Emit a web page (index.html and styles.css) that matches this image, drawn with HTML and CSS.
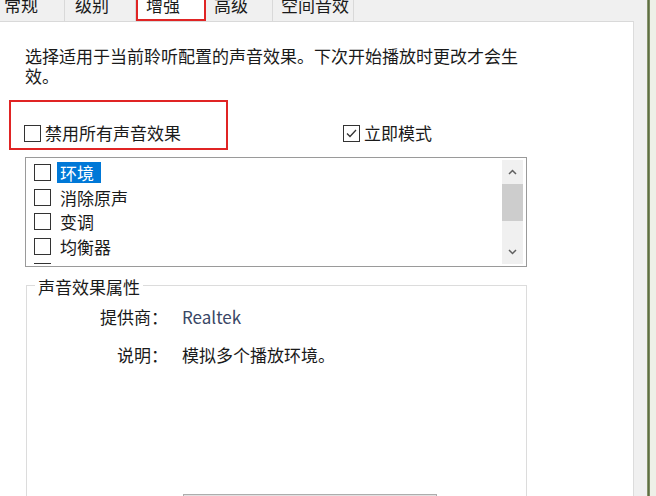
FILE: index.html
```html
<!DOCTYPE html>
<html lang="zh-CN">
<head>
    <meta charset="UTF-8">
    <meta name="viewport" content="width=device-width, initial-scale=1.0">
    <title>声音属性 - 增强</title>
    <link rel="stylesheet" href="styles.css">
</head>
<body>
    <div class="screen">
        <div class="dialog">
            <div class="tabs">
                <div class="tab">常规</div>
                <div class="tab">级别</div>
                <div class="tab active">增强</div>
                <div class="tab narrow">高级</div>
                <div class="tab wide">空间音效</div>
            </div>

            <div class="page">
                <p class="intro">选择适用于当前聆听配置的声音效果。下次开始播放时更改才会生效。</p>

                <div class="options">
                    <div class="mark">
                        <label class="check"><span class="box"></span>禁用所有声音效果</label>
                    </div>
                    <label class="check instant">
                        <span class="box">
                            <svg width="13" height="13" viewBox="0 0 13 13"><polyline points="2,6.5 5,9.5 11,3" fill="none" stroke="#333" stroke-width="1.3"/></svg>
                        </span>立即模式
                    </label>
                </div>

                <div class="listbox">
                    <ul class="effects">
                        <li><span class="box"></span><span class="name selected">环境</span></li>
                        <li><span class="box"></span><span class="name">消除原声</span></li>
                        <li><span class="box"></span><span class="name">变调</span></li>
                        <li><span class="box"></span><span class="name">均衡器</span></li>
                        <li><span class="box"></span><span class="name">响度均衡</span></li>
                    </ul>
                    <div class="scrollbar">
                        <span class="arrow">
                            <svg width="9" height="6" viewBox="0 0 9 6"><polyline points="1,5 4.5,1.5 8,5" fill="none" stroke="#606060" stroke-width="1.5"/></svg>
                        </span>
                        <span class="thumb"></span>
                        <span class="track"></span>
                        <span class="arrow">
                            <svg width="9" height="6" viewBox="0 0 9 6"><polyline points="1,1 4.5,4.5 8,1" fill="none" stroke="#606060" stroke-width="1.5"/></svg>
                        </span>
                    </div>
                </div>

                <div class="props">
                    <div class="props-title">声音效果属性</div>
                    <div class="prop-grid">
                        <span class="prop-label">提供商：</span>
                        <span class="vendor">Realtek</span>
                        <span class="prop-label">说明：</span>
                        <span>模拟多个播放环境。</span>
                    </div>
                    <button class="settings">设置(S)...</button>
                </div>
            </div>
        </div>
        <div class="edge"></div>
        <div class="desk"></div>
    </div>
</body>
</html>
```

FILE: styles.css
```css
body {
    margin: 0;
    background: #f0f0f0;
    font-family: "Noto Sans CJK SC", "Microsoft YaHei", sans-serif;
    font-size: 17px;
    color: #1a1a1a;
    overflow: hidden;
}

.screen {
    display: flex;
    width: 656px;
    height: 496px;
    overflow: hidden;
}

.dialog {
    width: 647px;
    flex: none;
    background: #f0f0f0;
}

/* tab strip, cut off at the top of the shot */
.tabs {
    display: flex;
    height: 21px;
    margin-left: -6px;
}

.tab {
    height: 21px;
    box-sizing: border-box;
    line-height: 9px;
    padding: 0 26px 0 10px;
    border-right: 1px solid #d9d9d9;
    white-space: nowrap;
}

.tab.active {
    background: #fff;
    border: 2px solid #e02424;
    border-top: none;
    padding: 0 24px 0 8px;
}

.tab.narrow {
    padding: 0 24px 0 8px;
}

.tab.wide {
    padding: 0 4px 0 8px;
}

.page {
    background: #fff;
    border-top: 1px solid #d9d9d9;
    border-right: 1px solid #dcdcdc;
    margin-right: 13px;
    height: 475px;
    box-sizing: border-box;
    padding: 24px 0 0 25px;
    overflow: hidden;
}

.intro {
    margin: 0;
    width: 500px;
    line-height: 20px;
}

.options {
    display: flex;
    align-items: flex-end;
    margin: 14px 0 0 -16px;
}

.mark {
    width: 219px;
    height: 50px;
    box-sizing: border-box;
    border: 2px solid #e02424;
    padding: 0 0 5px 13px;
    display: flex;
    align-items: flex-end;
}

.check {
    display: flex;
    align-items: center;
    gap: 4px;
    line-height: 20px;
}

.instant {
    margin: 0 0 7px 115px;
}

.box {
    width: 17px;
    height: 17px;
    flex: none;
    box-sizing: border-box;
    border: 1px solid #333;
    background: #fff;
    display: flex;
    align-items: center;
    justify-content: center;
}

/* effect list with scrollbar */
.listbox {
    display: flex;
    margin-top: 7px;
    width: 502px;
    height: 110px;
    box-sizing: border-box;
    border: 1px solid #9a9a9a;
    background: #fff;
    padding: 2px 3px 2px 8px;
}

.effects {
    list-style: none;
    margin: 0;
    padding: 0;
    flex: 1;
    overflow: hidden;
}

.effects li {
    display: flex;
    align-items: center;
    gap: 6px;
    height: 24.7px;
    white-space: nowrap;
}

.name {
    line-height: 21px;
    padding: 0 7px 0 3px;
}

.name.selected {
    background: #0078d7;
    color: #fff;
}

.scrollbar {
    width: 21px;
    background: #f0f0f0;
    display: flex;
    flex-direction: column;
}

.arrow {
    height: 24px;
    display: flex;
    align-items: center;
    justify-content: center;
}

.thumb {
    height: 37px;
    background: #cdcdcd;
}

.track {
    flex: 1;
}

/* group box */
.props {
    margin: 18px 0 0 1px;
    width: 501px;
    height: 260px;
    box-sizing: border-box;
    border: 1px solid #dcdcdc;
    line-height: 20px;
}

.props-title {
    width: fit-content;
    margin: -9px 0 0 8px;
    padding: 0 3px;
    background: #fff;
}

.prop-grid {
    display: grid;
    grid-template-columns: 141px auto;
    column-gap: 14px;
    row-gap: 18px;
    margin-top: 10px;
}

.prop-label {
    text-align: right;
}

.vendor {
    color: #3a4766;
}

.settings {
    display: block;
    margin: 129px 0 0 156px;
    width: 254px;
    height: 28px;
    border: 1px solid #adadad;
    background: #e1e1e1;
    font: inherit;
    color: #1a1a1a;
}

.edge {
    width: 3px;
    flex: none;
    background: linear-gradient(to right, #9aa67e, #5e6e44, #8b9870);
}

.desk {
    flex: 1;
    background: #eef0e8;
}
```
